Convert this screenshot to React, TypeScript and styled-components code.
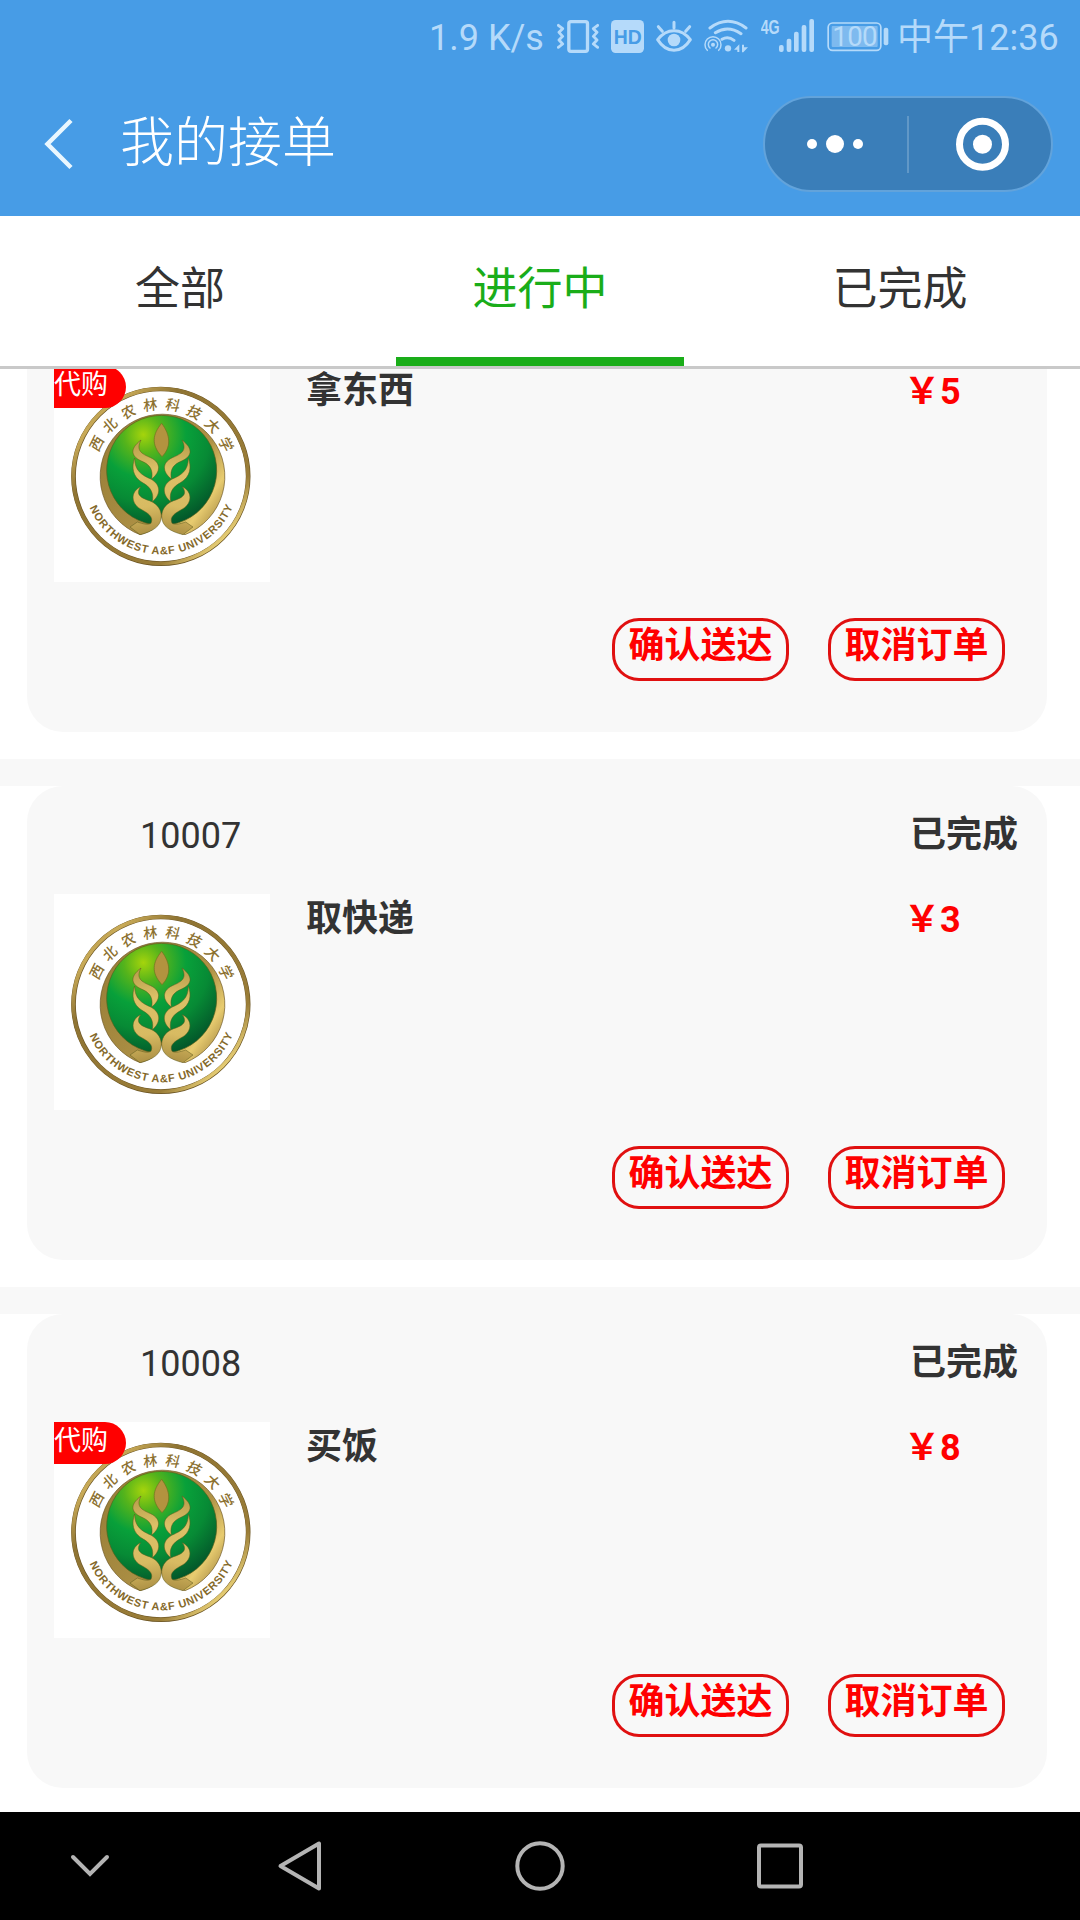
import React from "react";
import styled, { createGlobalStyle } from "styled-components";

const GlobalStyle = createGlobalStyle`
  * { box-sizing: border-box; }
  html, body { margin: 0; padding: 0; background: #fff; }
  body { font-family: Roboto, "Noto Sans CJK SC", sans-serif; color: #333; }
  svg { display: block; flex: none; }
`;

const ICON = "#b5dafa";
const BLUE = "#479ce6";

const Screen = styled.div`
  width: 1080px;
  height: 1920px;
  display: flex;
  flex-direction: column;
  overflow: hidden;
  background: #fff;
`;

const Header = styled.header`
  flex: none;
  height: 216px;
  background: ${BLUE};
`;

const StatusBar = styled.div`
  height: 72px;
  display: flex;
  align-items: center;
  padding-left: 429px;
  font-size: 36px;
  color: ${ICON};
`;

const Speed = styled.span`
  width: 128px;
  line-height: 42px;
  padding-top: 3px;
  white-space: nowrap;
`;

const StatusIcons = styled.div`
  display: flex;
  width: 340px;
  gap: 12px;
`;

const Clock = styled.span`
  line-height: 42px;
  padding-top: 3px;
  white-space: nowrap;
`;

const TitleBar = styled.div`
  height: 144px;
  display: flex;
  align-items: center;
  padding: 0 27px 0 43px;
`;

const PageTitle = styled.h1`
  flex: 1;
  margin: 0 0 0 46px;
  font-size: 54px;
  line-height: 72px;
  font-weight: 300;
  color: #fff;
`;

const Capsule = styled.div`
  width: 290px;
  height: 96px;
  display: flex;
  align-items: center;
  border: 2px solid #62a3db;
  border-radius: 48px;
  background: #3a7eb9;
`;

const CapsuleDivider = styled.i`
  width: 2px;
  height: 57px;
  background: #6198c7;
`;

const Tabs = styled.nav`
  flex: none;
  height: 153px;
  display: grid;
  grid-template-columns: repeat(3, 1fr);
  border-bottom: 3px solid #c9c9c9;
`;

const Tab = styled.div<{ $active?: boolean }>`
  display: flex;
  flex-direction: column;
  align-items: center;
  justify-content: space-between;
  padding-top: 41px;
  font-size: 45px;
  line-height: 66px;
  color: ${(p) => (p.$active ? "#1aad19" : "#333")};
  &::after {
    content: "";
    width: 288px;
    height: 9px;
    background: ${(p) => (p.$active ? "#1aad19" : "transparent")};
  }
`;

const List = styled.main`
  flex: 1;
  min-height: 0;
  overflow: hidden;
`;

const Scrolled = styled.div`
  margin-top: -111px;
`;

const Separator = styled.div`
  height: 27px;
  margin-top: 27px;
  background: #f8f8f8;
`;

const Card = styled.article`
  width: 1020px;
  height: 474px;
  margin-left: 27px;
  padding: 0 27px;
  border-radius: 36px;
  background: #f8f8f8;
`;

const CardHead = styled.div`
  height: 108px;
  display: flex;
  justify-content: space-between;
  padding: 22px 2px 0 86px;
  font-size: 36px;
  line-height: 54px;
`;

const OrderNo = styled.span`
  padding-top: 1px;
`;

const Status = styled.span`
  font-weight: 700;
`;

const CardBody = styled.div`
  display: flex;
  height: 216px;
  font-size: 36px;
  line-height: 54px;
  font-weight: 700;
`;

const Thumb = styled.div`
  position: relative;
  width: 216px;
  height: 216px;
  background: #fff;
`;

const Badge = styled.span`
  position: absolute;
  left: 0;
  top: 0;
  width: 72px;
  height: 42px;
  border-radius: 0 21px 21px 0;
  background: #f00;
  color: #fff;
  font-size: 27px;
  line-height: 39px;
  font-weight: 400;
`;

const ItemName = styled.span`
  width: 598px;
  margin-left: 36px;
  margin-top: -2px;
`;

const Price = styled.span`
  color: #f00;
  margin-top: -1px;
`;

const Actions = styled.div`
  display: flex;
  justify-content: flex-end;
  gap: 39px;
  padding: 36px 15px 0 0;
`;

const ActionButton = styled.button`
  width: 177px;
  height: 63px;
  padding: 0 0 7px;
  border: 3px solid #e01010;
  border-radius: 27px;
  background: transparent;
  font-family: inherit;
  font-size: 36px;
  line-height: 50px;
  font-weight: 700;
  color: #f00;
  white-space: nowrap;
  display: flex;
  align-items: center;
  justify-content: center;
`;

const NavBar = styled.footer`
  flex: none;
  height: 108px;
  display: flex;
  align-items: center;
  background: #000;
  padding: 0 0 0 60px;
`;

const NavSlot = styled.div<{ $w: number }>`
  width: ${(p) => p.$w}px;
`;

const VibrateIcon = () => (
  <svg width="42" height="42" viewBox="411 45 126 126" fill="none" stroke={ICON} strokeLinejoin="round" strokeLinecap="round">
    <rect x="446.500" y="65" width="56" height="89" rx="6" strokeWidth="10" />
    <path d="M415 76L428 86L417 97L428 109L417 120L428 132L415 142M533 76L520 86L531 97L520 109L531 120L520 132L533 142" strokeWidth="8.500" />
  </svg>
);

const HdIcon = () => (
  <svg width="33" height="42" viewBox="573 45 99 126">
    <rect x="573" y="60" width="99" height="99" rx="14" fill={ICON} />
    <text x="581" y="131" fontFamily="Liberation Sans, sans-serif" fontWeight="700" fontSize="61" textLength="84" lengthAdjust="spacingAndGlyphs" fill={BLUE}>HD</text>
  </svg>
);

const EyeIcon = () => (
  <svg width="36" height="42" viewBox="708 45 108 126" fill="none" stroke={ICON} strokeWidth="9" strokeLinecap="round" strokeLinejoin="round">
    <path d="M713 119Q733 92 762 92Q791 92 811 119Q791 151 762 151Q733 151 713 119Z" />
    <circle cx="762" cy="120" r="19" fill={ICON} stroke="none" />
    <path d="M762 67V84M715 80L727 94M809 80L797 94" />
  </svg>
);

const WifiIcon = () => (
  <svg width="45" height="42" viewBox="843 45 135 126" fill="none" stroke={ICON} strokeLinecap="round">
    <path d="M861 84Q915 44 969 84M877 98Q915 74 954 101M897 118Q915 107 933 121" strokeWidth="9" />
    <circle cx="915" cy="145" r="9.500" fill={ICON} stroke="none" />
    <circle cx="870" cy="134" r="6" fill={ICON} stroke="none" />
    <path d="M861 144A14 14 0 1 1 879 144" strokeWidth="4.500" />
    <path d="M853 151A24 24 0 1 1 887 151" strokeWidth="4.500" />
    <path d="M949 133V156H943V149H933ZM957 134H963V142H975L961 157H957Z" fill={ICON} stroke="none" />
  </svg>
);

const SignalIcon = () => (
  <svg width="54" height="42" viewBox="45 45 162 126" fill={ICON}>
    <text x="44" y="101" fontFamily="Liberation Sans, sans-serif" fontWeight="700" fontSize="59" textLength="57" lengthAdjust="spacingAndGlyphs">4G</text>
    <rect x="99" y="135" width="14" height="21" rx="6" />
    <rect x="122" y="116" width="14" height="40" rx="6" />
    <rect x="144" y="95" width="14" height="61" rx="6" />
    <rect x="167" y="75" width="14" height="81" rx="6" />
    <rect x="190" y="57" width="14" height="99" rx="6" />
  </svg>
);

const BatteryIcon = () => (
  <svg width="62" height="42" viewBox="250 45 186 126">
    <rect x="253.500" y="69" width="158" height="82" rx="13" fill="none" stroke={ICON} strokeWidth="5" />
    <rect x="264" y="78" width="138" height="63" rx="3" fill="#7ebaef" />
    <text x="334" y="139" textAnchor="middle" fontFamily="Roboto, sans-serif" fontSize="83" textLength="136" fill={ICON}>100</text>
    <rect x="420" y="83" width="14" height="53" rx="6" fill={ICON} />
  </svg>
);

/* One strand of the wheat ear; the second is its mirror image. */
const STRAND =
  "M273 234C236 262 245 285 276 298C300 308 310 324 305 351C332 330 334 302 302 287C274 275 257 266 273 234Z" +
  "M254 288C244 316 248 344 276 361C302 375 312 392 307 419C332 398 334 370 304 352C274 339 254 326 254 288Z" +
  "M272 374C240 390 244 424 270 440C292 453 312 462 303 484C292 490 278 485 262 480L240 495L270 518C310 508 334 492 334 462C332 436 318 424 298 416C270 407 256 396 272 374Z";

const HANZI = Array.from("西北农林科技大学");

const Emblem = ({ id }: { id: string }) => (
  <svg width="216" height="216" viewBox="12 12 648 648">
    <defs>
      <linearGradient id={`${id}-ring`} x1="0" y1="0" x2="1" y2="1">
        <stop offset="0" stopColor="#8a6f2e" />
        <stop offset=".16" stopColor="#c9ab58" />
        <stop offset=".3" stopColor="#8f7433" />
        <stop offset=".75" stopColor="#9a7d38" />
        <stop offset=".86" stopColor="#e6cd74" />
        <stop offset="1" stopColor="#8a6f2e" />
      </linearGradient>
      <linearGradient id={`${id}-gold`} gradientUnits="userSpaceOnUse" x1="150" y1="250" x2="500" y2="500">
        <stop offset="0" stopColor="#9a7f38" />
        <stop offset=".45" stopColor="#a88c42" />
        <stop offset=".62" stopColor="#b09245" />
        <stop offset=".83" stopColor="#e8cc70" />
        <stop offset="1" stopColor="#a38740" />
      </linearGradient>
      <linearGradient id={`${id}-leaf`} gradientUnits="userSpaceOnUse" x1="250" y1="230" x2="310" y2="520">
        <stop offset="0" stopColor="#b49a48" />
        <stop offset=".35" stopColor="#dcc067" />
        <stop offset=".7" stopColor="#d8bb62" />
        <stop offset="1" stopColor="#a98d42" />
      </linearGradient>
      <radialGradient id={`${id}-green`} gradientUnits="userSpaceOnUse" cx="280" cy="218" r="285">
        <stop offset="0" stopColor="#a5d40c" />
        <stop offset=".2" stopColor="#56b41b" />
        <stop offset=".45" stopColor="#08a03a" />
        <stop offset=".7" stopColor="#078a35" />
        <stop offset="1" stopColor="#03562a" />
      </radialGradient>
      <path id={`${id}-arc`} d="M117.600 434.400A234 234 0 0 0 550 430.700" />
    </defs>
    <circle cx="332.500" cy="343" r="262" fill="none" stroke="#6b5422" strokeWidth="14" />
    <circle cx="332" cy="342.500" r="262" fill="none" stroke={`url(#${id}-ring)`} strokeWidth="11" />
    <path
      d="M270 518A187 187 0 1 1 405 518C368 508 342 490 334 462C326 490 308 509 270 518Z"
      fill={`url(#${id}-gold)`}
      stroke="#6b5422"
      strokeWidth="2"
    />
    <path
      d="M303 487A165 165 0 1 1 367 487C354 470 334 468 334 455C334 468 316 470 303 487Z"
      fill={`url(#${id}-green)`}
      stroke="#56601a"
      strokeWidth="2"
    />
    <g fill={`url(#${id}-leaf)`} stroke="#5d5a1c" strokeWidth="1.500">
      <path d={STRAND} />
      <path d={STRAND} transform="matrix(-1 0 0 1 669 0)" />
    </g>
    <path d="M335 184C308 216 302 248 336 284C364 256 362 220 335 184Z" fill="#b3933f" stroke="#6f7020" strokeWidth="2" />
    <g fill="#8c7130" fontFamily="'Noto Sans CJK SC', sans-serif" fontSize="43" fontWeight="500" textAnchor="middle">
      {HANZI.map((c, i) => (
        <text key={i} transform={`translate(333 343) rotate(${(i - 3.5) * 18.1}) translate(0 -201) skewX(-6)`}>
          {c}
        </text>
      ))}
    </g>
    <text fill="#84692a" fontFamily="'Liberation Sans', sans-serif" fontWeight="700" fontSize="33">
      <textPath href={`#${id}-arc`} startOffset="2" textLength="546" lengthAdjust="spacing">
        NORTHWEST A&amp;F UNIVERSITY
      </textPath>
    </text>
  </svg>
);

interface Order {
  no: string;
  name: string;
  price: number;
  errand: boolean;
}

const ORDERS: Order[] = [
  { no: "10006", name: "拿东西", price: 5, errand: true },
  { no: "10007", name: "取快递", price: 3, errand: false },
  { no: "10008", name: "买饭", price: 8, errand: true },
];

const OrderCard = ({ order }: { order: Order }) => (
  <Card>
    <CardHead>
      <OrderNo>{order.no}</OrderNo>
      <Status>已完成</Status>
    </CardHead>
    <CardBody>
      <Thumb>
        <Emblem id={`e${order.no}`} />
        {order.errand && <Badge>代购</Badge>}
      </Thumb>
      <ItemName>{order.name}</ItemName>
      <Price>￥{order.price}</Price>
    </CardBody>
    <Actions>
      <ActionButton>确认送达</ActionButton>
      <ActionButton>取消订单</ActionButton>
    </Actions>
  </Card>
);

export default function App() {
  return (
    <Screen>
      <GlobalStyle />
      <Header>
        <StatusBar>
          <Speed>1.9 K/s</Speed>
          <StatusIcons>
            <VibrateIcon />
            <HdIcon />
            <EyeIcon />
            <WifiIcon />
            <SignalIcon />
            <BatteryIcon />
          </StatusIcons>
          <Clock>中午12:36</Clock>
        </StatusBar>
        <TitleBar>
          <svg width="31" height="54" viewBox="43 117 31 54" fill="none" stroke="#e9f7ff" strokeWidth="4.500">
            <path d="M71 120.500L47.500 144L71 167.500" />
          </svg>
          <PageTitle>我的接单</PageTitle>
          <Capsule>
            <svg width="142" height="92" viewBox="0 0 142 92" fill="#fff">
              <circle cx="47" cy="46" r="5" />
              <circle cx="70" cy="46" r="9" />
              <circle cx="93" cy="46" r="5" />
            </svg>
            <CapsuleDivider />
            <svg width="142" height="92" viewBox="0 0 142 92">
              <circle cx="73.500" cy="46.300" r="23" fill="none" stroke="#fff" strokeWidth="7" />
              <circle cx="73.500" cy="46.300" r="9.500" fill="#fff" />
            </svg>
          </Capsule>
        </TitleBar>
      </Header>
      <Tabs>
        <Tab>全部</Tab>
        <Tab $active>进行中</Tab>
        <Tab>已完成</Tab>
      </Tabs>
      <List>
        <Scrolled>
          {ORDERS.map((o, i) => (
            <React.Fragment key={o.no}>
              {i > 0 && <Separator />}
              <OrderCard order={o} />
            </React.Fragment>
          ))}
        </Scrolled>
      </List>
      <NavBar>
        <NavSlot $w={210}>
          <svg width="60" height="60" viewBox="60 1836 60 60" fill="none" stroke="#b4b4b4" strokeWidth="4" strokeLinecap="round">
            <path d="M73 1857L90 1874L107 1857" />
          </svg>
        </NavSlot>
        <NavSlot $w={240}>
          <svg width="60" height="60" viewBox="270 1836 60 60" fill="none" stroke="#b4b4b4" strokeWidth="4" strokeLinejoin="round">
            <path d="M319 1843.500V1888.500L280.500 1866Z" />
          </svg>
        </NavSlot>
        <NavSlot $w={240}>
          <svg width="60" height="60" viewBox="510 1836 60 60" fill="none" stroke="#b4b4b4" strokeWidth="4">
            <circle cx="540" cy="1866" r="22.700" />
          </svg>
        </NavSlot>
        <NavSlot $w={60}>
          <svg width="60" height="60" viewBox="750 1836 60 60" fill="none" stroke="#b4b4b4" strokeWidth="4">
            <rect x="759" y="1845.500" width="42" height="41" rx="2" />
          </svg>
        </NavSlot>
      </NavBar>
    </Screen>
  );
}
